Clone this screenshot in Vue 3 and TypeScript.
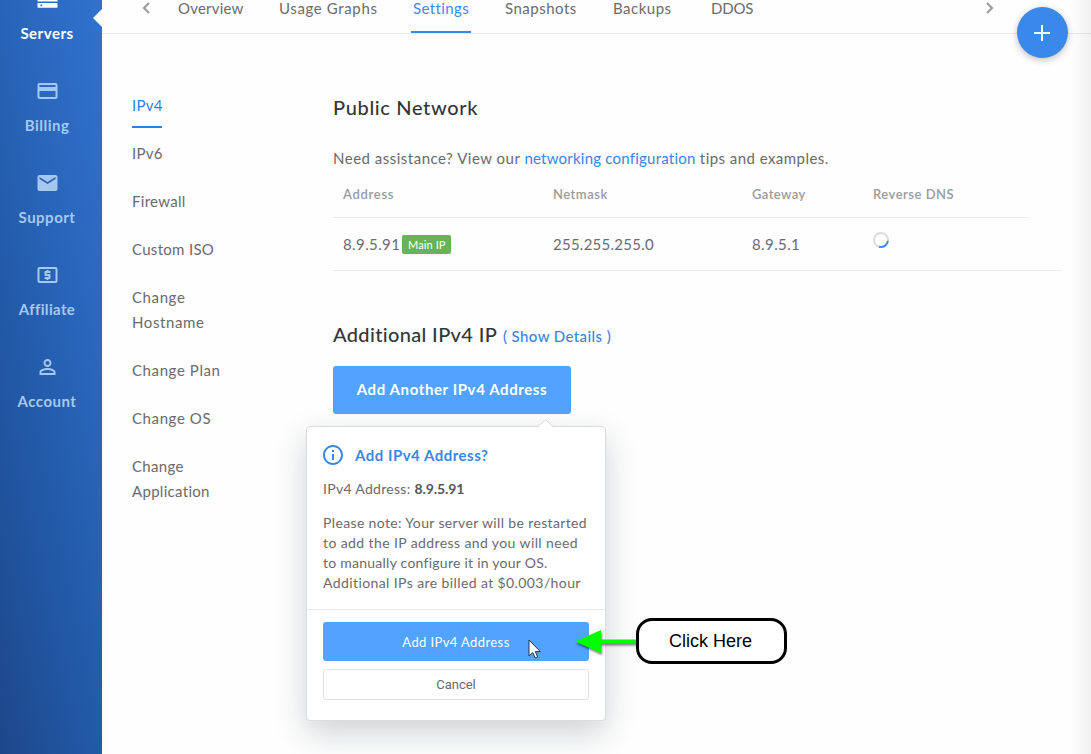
<script setup lang="ts">
interface NavItem { label: string; icon: string; cls: string }

const navItems: NavItem[] = [
  { label: 'Servers', cls: 'active n-servers', icon: 'M4 1h16a1 1 0 0 1 1 1v5H3V2a1 1 0 0 1 1-1zM2 9h20v5.500H2zM2 16h20v4a.7.7 0 0 1-.7.7H2.700A.7.7 0 0 1 2 20zm3 1.500v1.800h1.800v-1.800z' },
  { label: 'Billing', cls: 'n-billing', icon: 'M20 4H4c-1.11 0-1.99.89-1.99 2L2 18c0 1.11.89 2 2 2h16c1.11 0 2-.89 2-2V6c0-1.11-.89-2-2-2zm0 14H4v-6h16v6zm0-10H4V6h16v2z' },
  { label: 'Support', cls: 'n-support', icon: 'M20 4H4c-1.1 0-1.99.9-1.99 2L2 18c0 1.1.9 2 2 2h16c1.1 0 2-.9 2-2V6c0-1.1-.9-2-2-2zm0 4l-8 5-8-5V6l8 5 8-5v2z' },
  { label: 'Affiliate', cls: 'n-affiliate', icon: 'M11 17h2v-1h1c.55 0 1-.45 1-1v-3c0-.55-.45-1-1-1h-3v-1h4V8h-2V7h-2v1h-1c-.55 0-1 .45-1 1v3c0 .55.45 1 1 1h3v1H9v2h2v1zm9-13H4c-1.11 0-1.99.89-1.99 2L2 18c0 1.11.89 2 2 2h16c1.11 0 2-.89 2-2V6c0-1.11-.89-2-2-2zm0 14H4V6h16v12z' },
  { label: 'Account', cls: 'n-account', icon: 'M12 5.9a2.1 2.1 0 1 1 0 4.2 2.1 2.1 0 0 1 0-4.2m0 9c2.970 0 6.100 1.460 6.100 2.100v1.100H5.900V17c0-.64 3.130-2.100 6.100-2.100M12 4C9.790 4 8 5.790 8 8s1.790 4 4 4 4-1.790 4-4-1.790-4-4-4zm0 9c-2.670 0-8 1.340-8 4v3h16v-3c0-2.660-5.330-4-8-4z' },
]

const tabs: string[] = ['Overview', 'Usage Graphs', 'Settings', 'Snapshots', 'Backups', 'DDOS']
const sections: string[] = ['IPv4', 'IPv6', 'Firewall', 'Custom ISO', 'Change Hostname', 'Change Plan', 'Change OS', 'Change Application']
</script>

<template>
  <div class="page">
    <aside class="sidebar">
      <a v-for="item in navItems" :key="item.label" class="nav-item" :class="item.cls">
        <svg class="nav-icon" viewBox="0 0 24 24"><path :d="item.icon" fill-rule="evenodd" /></svg>
        <span>{{ item.label }}</span>
      </a>
      <i class="notch"></i>
    </aside>

    <div class="content">
      <header class="tabbar">
        <svg class="chev" viewBox="0 0 10 14"><path d="M8 2 3 7l5 5" /></svg>
        <nav class="tabs">
          <a v-for="(tab, i) in tabs" :key="tab" class="tab" :class="['t' + i, { on: tab === 'Settings' }]">{{ tab }}</a>
        </nav>
        <svg class="chev next" viewBox="0 0 10 14"><path d="M2 2l5 5-5 5" /></svg>
      </header>

      <div class="body">
        <nav class="subnav">
          <a v-for="s in sections" :key="s" :class="{ on: s === 'IPv4', wide: s.startsWith('Change') && s !== 'Change Application' }">{{ s }}</a>
        </nav>

        <main class="main">
          <h2 class="h-public">Public Network</h2>
          <p class="help"><span>Need assistance? View our </span><a>networking configuration</a> tips and examples.</p>
          <div class="row head"><span class="c0">Address</span><span>Netmask</span><span class="c2">Gateway</span><span>Reverse DNS</span></div>
          <div class="row data">
            <span class="ip">8.9.5.91<b class="badge">Main IP</b></span>
            <span class="mask">255.255.255.0</span>
            <span>8.9.5.1</span>
            <svg class="spinner" viewBox="0 0 18 18">
              <circle cx="9" cy="9" r="7" stroke="#dcdcdc" />
              <path d="M15.900 9.800A7 7 0 0 1 7 15.700" stroke="#3f8eec" />
            </svg>
          </div>
          <h2 class="h-add">Additional IPv4 IP <a>( Show Details )</a></h2>
          <div class="anchor">
            <button class="add-btn">Add Another IPv4 Address</button>
            <section class="popover">
              <svg class="arrow" viewBox="0 0 18 9"><path d="M0 9 8.500.700 17 9z" fill="#fff" /><path d="M.500 8 8.500.700 16.500 8" fill="none" stroke="#d9d9d9" /></svg>
              <div class="pop-body">
                <h3>
                  <svg viewBox="0 0 24 24"><path d="M11 7h2v2h-2zm0 4h2v6h-2zm1-9C6.480 2 2 6.480 2 12s4.480 10 10 10 10-4.480 10-10S17.520 2 12 2zm0 18c-4.410 0-8-3.590-8-8s3.590-8 8-8 8 3.590 8 8-3.590 8-8 8z" /></svg>
                  <span>Add IPv4 Address?</span>
                </h3>
                <p class="pop-ip">IPv4 Address: <b>8.9.5.91</b></p>
                <p class="note"><span class="l1">Please note: Your server will be restarted</span><span class="l2">to add the IP address and you will need</span><span class="l3">to manually configure it in your OS.</span><span class="l4">Additional IPs are billed at $0.003/hour</span></p>
              </div>
              <div class="pop-actions">
                <button class="confirm">Add IPv4 Address</button>
                <button class="cancel">Cancel</button>
              </div>
            </section>
          </div>
        </main>
      </div>
    </div>

    <button class="fab"><svg viewBox="0 0 18 18"><path d="M9 1v16M1 9h16" /></svg></button>
    <svg class="cursor" viewBox="0 0 13 20"><path d="M1 1v16l3.700-3.500L7.200 19l2.500-1.100-2.400-5.300h5z" /></svg>
    <svg class="callout-arrow" viewBox="0 0 64 26"><path d="M1 12.500 27 1v9.500h36v4H27V24z" /></svg>
    <div class="callout">Click Here</div>
  </div>
</template>

<style>
body { background: #fefefe; overflow: hidden; }
</style>

<style scoped>
* { box-sizing: border-box; }
.page { position: relative; display: flex; width: 1091px; height: 754px; overflow: hidden; background: #fefefe; font: 15px/25px Lato, "Open Sans", sans-serif; color: #6a6b6d; font-variant-ligatures: none; }
.page::after { content: ""; position: absolute; right: 0; top: 0; width: 20px; height: 754px; background: linear-gradient(to right, rgba(0,0,0,0), rgba(0,0,0,.055)); pointer-events: none; }
h2, h3, p { margin: 0; }
button { font-family: inherit; border: 0; padding: 0; display: block; }
a { color: #3a85e2; }

.sidebar { position: relative; width: 102px; flex: none; margin-top: -33px; height: 787px; background: linear-gradient(to bottom left, #3173d0 0%, #2961b2 55%, #1e4a90 100%); background: linear-gradient(258deg, #3173cf 0%, #2c6ac2 25%, #2259a6 65%, #1d478a 100%); }
.nav-item { height: 92px; padding-top: 20px; display: flex; flex-direction: column; align-items: center; gap: 12px; color: #a6c8f0; font-weight: 700; line-height: 20px; padding-right: 8px; letter-spacing: .5px; }
.n-affiliate { letter-spacing: .35px; }
.nav-item.active { color: #fff; }
.nav-icon { width: 25px; height: 24px; fill: currentColor; }
.notch { position: absolute; right: 0; top: 42px; border: solid transparent; border-width: 9px 9px 9px 0; border-right-color: #fefefe; }

.content { flex: 1; }
.tabbar { height: 34px; border-bottom: 1px solid #ebebeb; display: flex; padding-left: 39px; color: #696b6e; }
.chev { width: 10px; height: 14px; margin-top: 1px; flex: none; fill: none; stroke: #98999b; stroke-width: 2; }
.chev.next { margin-left: 1.5px; }
.tabs { display: grid; grid-template-columns: 101px 134px 92px 108px 98px 272px; margin-left: 27px; width: 805px; }
.tab { color: #6a6b6d; line-height: 16px; height: 33px; justify-self: start; letter-spacing: .5px; white-space: nowrap; }
.t0 { letter-spacing: .2px; }
.t1 { letter-spacing: .63px; }
.t5 { letter-spacing: -.2px; }
.tab.on { color: #3e8aec; width: 60px; border-bottom: 2px solid #3a87e8; margin-left: -2px; padding-left: 2px; letter-spacing: .4px; }
.body { display: flex; }
.subnav { width: 231px; padding: 59px 0 0 30px; display: flex; flex-direction: column; align-items: flex-start; gap: 23px; }
.subnav a { width: 92px; color: #6a6b6d; letter-spacing: .3px; }
.subnav .wide { letter-spacing: .6px; }
.subnav .on { width: 30px; color: #2f80de; border-bottom: 2px solid #2f80de; padding-bottom: 8px; margin-bottom: -10px; }

.main { flex: 1; }
h2 { font-size: 20px; font-weight: 500; line-height: 28px; color: #34373a; white-space: nowrap; }
.h-public { margin-top: 59px; letter-spacing: .65px; }
.help { margin-top: 25px; letter-spacing: .45px; white-space: nowrap; }
.help span { letter-spacing: .5px; }
.help a { letter-spacing: .22px; }
.row { display: grid; grid-template-columns: 210px 199px 121px 1fr; padding-left: 10px; border-bottom: 1px solid #ebebeb; }
.head { width: 696px; height: 47px; padding-top: 12px; line-height: 22px; font-size: 13px; font-weight: 600; color: #999b9e; letter-spacing: .5px; }
.c0 { letter-spacing: .7px; }
.c2 { letter-spacing: .4px; }
.data { width: 729px; height: 53px; padding-top: 14px; line-height: 25px; letter-spacing: .4px; }
.mask { letter-spacing: .25px; }
.ip { display: flex; align-items: center; gap: 2px; height: 25px; }
.badge { width: 49px; height: 19px; border-radius: 2px; background: #65b556; color: #fff; font: 11px/19px Lato, sans-serif; text-align: center; letter-spacing: .1px; }
.spinner { width: 18px; height: 18px; fill: none; stroke-width: 2; margin: -1px 0 0 -1px; }
.h-add { margin-top: 49px; letter-spacing: .35px; }
.h-add a { font-size: 15px; letter-spacing: .4px; margin-left: 1px; }
.anchor { position: relative; margin-top: 16px; width: 238px; }
.add-btn { width: 238px; height: 48px; border-radius: 3px; background: #52a3ff; color: #fff; font-size: 15px; line-height: 22px; padding-bottom: 2px; font-weight: 700; letter-spacing: .6px; }

.popover { position: absolute; left: -27px; top: 60px; width: 300px; height: 295px; background: #fff; border: 1px solid #dadbdc; border-radius: 4px; box-shadow: 0 12px 32px rgba(20,30,45,.2); font-size: 14px; line-height: 20px; }
.arrow { position: absolute; left: 230px; top: -8px; width: 18px; height: 9px; }
.pop-body { height: 183px; border-bottom: 1px solid #e8e9ea; padding: 16px; }
.pop-body h3 { display: flex; align-items: center; gap: 10px; color: #3a87e8; font-size: 15px; line-height: 24px; letter-spacing: .5px; }
.pop-body h3 svg { width: 24px; height: 24px; margin-left: -2px; fill: #3a87e8; }
.pop-ip { margin-top: 12px; letter-spacing: .3px; }
.pop-ip b { color: #56585b; letter-spacing: -.1px; }
.note { margin-top: 14px; }
.note span { display: block; white-space: nowrap; }
.l1 { letter-spacing: .36px; }
.l2, .l4 { letter-spacing: .4px; }
.l3 { letter-spacing: .25px; }
.pop-actions { padding: 12px 16px; }
.confirm { width: 266px; height: 39px; border-radius: 3px; background: #52a3ff; color: #fff; font-size: 13px; letter-spacing: .4px; }
.cancel { width: 266px; height: 31px; margin-top: 8px; border: 1px solid #dfe0e2; border-radius: 3px; background: #fff; color: #66686b; font: 13px/20px Roboto, sans-serif; }

.fab { position: absolute; left: 1017px; top: 7px; width: 51px; height: 51px; border-radius: 50%; background: #3a88e9; box-shadow: 0 2px 7px rgba(0,0,0,.25); }
.fab svg { display: block; width: 18px; height: 18px; margin-left: 16px; fill: none; stroke: #fff; stroke-width: 2; }
.cursor { position: absolute; left: 528px; top: 639px; width: 13px; height: 20px; fill: #fff; stroke: #263142; }
.callout-arrow { position: absolute; left: 574px; top: 629px; width: 64px; height: 26px; fill: #0f0; filter: drop-shadow(1px 2px 1px rgba(0,0,0,.5)); overflow: visible; }
.callout { position: absolute; left: 636px; top: 618px; width: 151px; height: 46px; border: 3px solid #000; border-radius: 16px; background: #fff; color: #000; font: 18px/40px "Liberation Sans", Arial, sans-serif; text-align: center; padding-right: 2px; }
</style>
